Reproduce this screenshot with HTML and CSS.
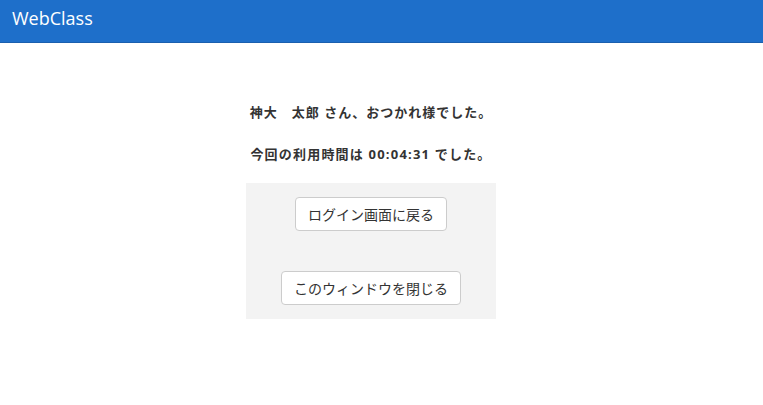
FILE: index.html
```html
<!DOCTYPE html>
<html lang="ja">
<head>
<meta charset="utf-8">
<title>WebClass</title>
<link rel="stylesheet" href="styles.css">
</head>
<body>
<header class="navbar"><span class="brand">WebClass</span></header>
<main class="content">
  <p class="msg">神大　太郎 さん、おつかれ様でした。</p>
  <p class="msg msg-time">今回の利用時間は 00:04:31 でした。</p>
  <div class="panel">
    <button class="btn">ログイン画面に戻る</button>
    <button class="btn">このウィンドウを閉じる</button>
  </div>
</main>
</body>
</html>
```
FILE: styles.css
```css
html, body { margin: 0; padding: 0; }
body {
  font-family: "Noto Sans CJK JP", "Noto Sans", sans-serif;
  color: #333;
  background: #fff;
}
.navbar {
  height: 42px;
  background: #1e6fca;
  border-bottom: 1px solid #1a5fae;
  display: flex;
  align-items: center;
  padding-left: 12px;
}
.brand {
  color: #fff;
  font-family: "Open Sans", "Liberation Sans", sans-serif;
  font-size: 18px;
  margin-top: -6px;
}
.content {
  display: flex;
  flex-direction: column;
  align-items: center;
  padding-top: 58px;
  padding-right: 21px;
}
.msg {
  margin: 0 0 20px;
  font-family: "Open Sans", "Noto Sans CJK JP", sans-serif;
  font-size: 13px;
  font-weight: bold;
  line-height: 22px;
  letter-spacing: 1px;
}
.msg-time {
  letter-spacing: 1.2px;
  margin-bottom: 19px;
}
.panel {
  width: 250px;
  background: #f3f3f3;
  display: flex;
  flex-direction: column;
  align-items: center;
  gap: 40px;
  padding: 14px 0;
  margin-top: -1px;
}
.btn {
  font-family: "Noto Sans CJK JP", sans-serif;
  font-size: 14px;
  color: #333;
  background: #fff;
  border: 1px solid #ccc;
  border-radius: 4px;
  height: 34px;
  padding: 0 12px;
}
```
